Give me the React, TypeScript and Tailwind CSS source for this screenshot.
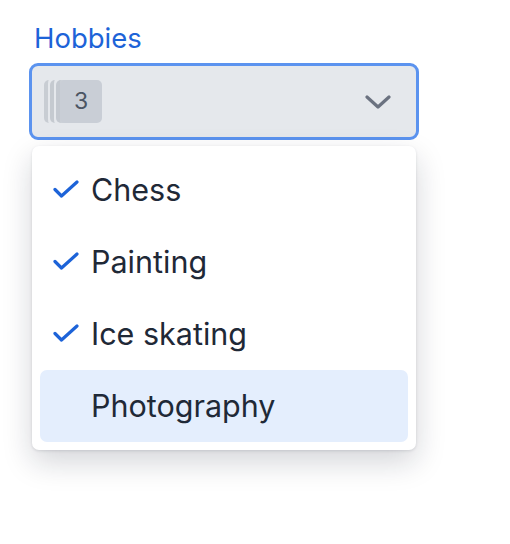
const hobbies = [
  { name: "Chess", checked: true },
  { name: "Painting", checked: true },
  { name: "Ice skating", checked: true },
  { name: "Photography", checked: false, active: true },
];

function CheckMark() {
  return (
    <svg width="26" height="18" viewBox="0 0 26 18" fill="none" className="text-[#1d63d8]">
      <path d="M2 9.5 8.5 16 24 2" stroke="currentColor" strokeWidth="3.2" strokeLinecap="round" strokeLinejoin="round" />
    </svg>
  );
}

function Chevron() {
  return (
    <svg width="26" height="14" viewBox="0 0 26 14" fill="none" className="text-[#6b7280]">
      <path d="M2 2 13 12 24 2" stroke="currentColor" strokeWidth="3.2" strokeLinecap="round" strokeLinejoin="round" />
    </svg>
  );
}

export default function App() {
  return (
    <div className="min-h-[544px] bg-white font-['Inter',sans-serif] pt-[21px] pl-[29px]">
      <div className="w-[390px]">
        <label className="block pl-[5px] text-[27.5px] leading-[35px] text-[#1d63d8]">Hobbies</label>
        <div className="mt-[7px] flex h-[77px] items-center justify-between rounded-[9px] border-[3px] border-[#5b93ef] bg-[#e5e8ec] pl-[12px] pr-[25px]">
          <div className="relative h-[43px] w-[58px]">
            <div className="absolute left-0 top-0 h-[43px] w-[40px] rounded-[5px] border-l-[4px] border-[#c2c7ce] opacity-80" />
            <div className="absolute left-[6px] top-0 h-[43px] w-[40px] rounded-[5px] border-l-[4px] border-[#c2c7ce] opacity-90" />
            <div className="absolute left-[12px] top-0 h-[43px] w-[42px] rounded-[5px] border-l-[4px] border-[#c4c9d0] bg-[#ccd1d8]" />
            <div className="absolute left-[16px] top-0 flex h-[43px] w-[42px] items-center justify-center rounded-[5px] bg-[#c9ced6] text-[23px] text-[#4b5563]">
              3
            </div>
          </div>
          <Chevron />
        </div>
        <div className="mx-[3px] mt-[6px] rounded-[7px] bg-white p-[8px] shadow-[0_12px_30px_rgba(15,23,42,0.18),0_1px_3px_rgba(15,23,42,0.12)]">
          {hobbies.map((h) => (
            <div
              key={h.name}
              className={`flex h-[72px] items-center rounded-[7px] pl-[13px] ${h.active ? "bg-[#e4eefd]" : ""}`}
            >
              <div className="flex w-[38px] items-center pb-[2px]">{h.checked && <CheckMark />}</div>
              <span className="text-[30.5px] text-[#1f2937]">{h.name}</span>
            </div>
          ))}
        </div>
      </div>
    </div>
  );
}
